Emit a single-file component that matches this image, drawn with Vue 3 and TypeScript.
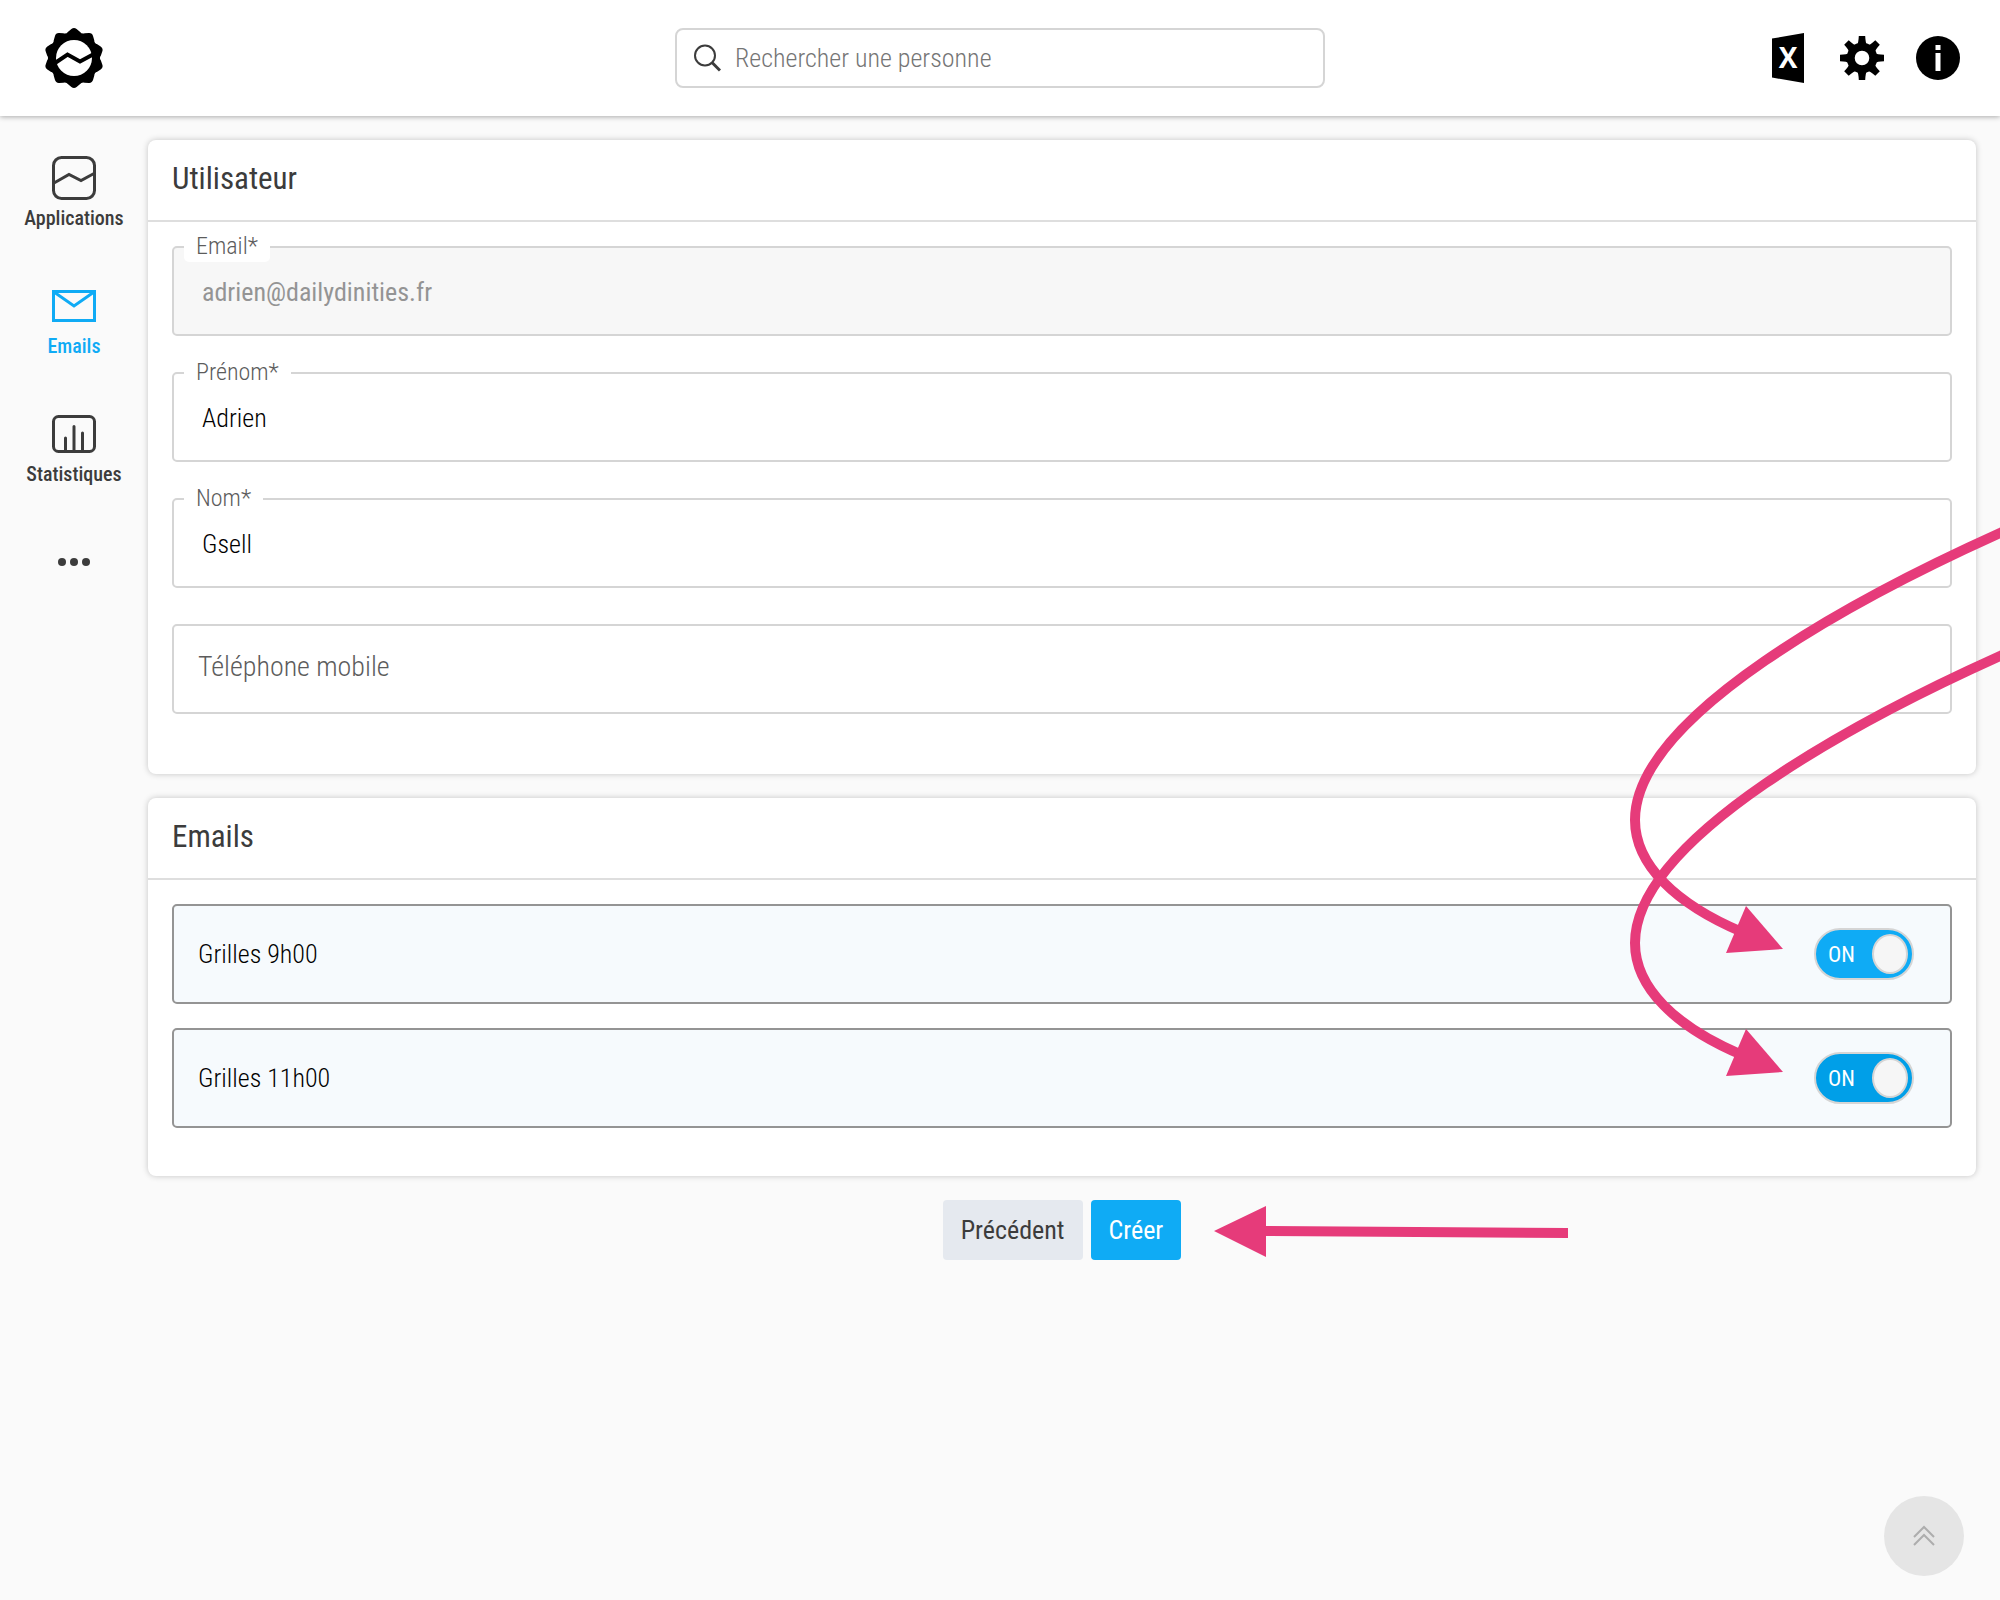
<script setup lang="ts">
import { ref } from 'vue'

interface Field {
  id: string
  label: string
  value: string
  type: string
  disabled?: boolean
}

interface MailingOption {
  id: string
  label: string
  enabled: boolean
  active: boolean
}

const search = ref('')

const fields = ref<Field[]>([
  { id: 'email', label: 'Email*', value: 'adrien@dailydinities.fr', type: 'email', disabled: true },
  { id: 'prenom', label: 'Prénom*', value: 'Adrien', type: 'text' },
  { id: 'nom', label: 'Nom*', value: 'Gsell', type: 'text' },
])

const phone = ref('')

const mailings = ref<MailingOption[]>([
  { id: 'grilles-9', label: 'Grilles 9h00', enabled: true, active: false },
  { id: 'grilles-11', label: 'Grilles 11h00', enabled: true, active: true },
])

// Outline of the ten-lobed badge used as the logo.
function badgePath(lobes: number, outer: number, inner: number): string {
  const at = (angle: number, r: number) =>
    `${(30 + r * Math.sin(angle)).toFixed(2)} ${(30 - r * Math.cos(angle)).toFixed(2)}`
  const step = (2 * Math.PI) / lobes
  let d = ''
  for (let i = 0; i < lobes; i++) {
    const a = i * step
    d += `${i ? 'L' : 'M'}${at(a - 0.09, outer - 1)} Q${at(a, outer + 1)} ${at(a + 0.09, outer - 1)} `
    d += `L${at(a + 0.22, inner + 1)} Q${at(a + step / 2, inner - 1)} ${at(a + step - 0.22, inner + 1)} `
  }
  return `${d}Z`
}

const badge = badgePath(10, 30, 26)
const teeth = [0, 45, 90, 135, 180, 225, 270, 315]
</script>

<template>
  <div class="app">
    <header class="topbar">
      <a class="brand" href="#" aria-label="Accueil">
        <svg width="60" height="60" viewBox="0 0 60 60">
          <path :d="badge" />
          <circle cx="30" cy="30" r="18" fill="#fff" />
          <path d="M11 35 L23.5 26.500 L36 33.500 L49 26.500" fill="none" stroke="#000" stroke-width="4" />
        </svg>
      </a>

      <label class="search">
        <svg width="28" height="28" viewBox="0 0 28 28" fill="none" stroke="#3c3c3c" stroke-width="2">
          <circle cx="12" cy="11.500" r="10" />
          <path d="M19 18.500 L27 26.500" stroke-width="3" />
        </svg>
        <input v-model="search" type="search" placeholder="Rechercher une personne" aria-label="Rechercher une personne" />
      </label>

      <div class="tools">
        <button type="button" class="tool" aria-label="Exporter vers Excel">
          <svg width="36" height="50" viewBox="0 0 36 50">
            <path d="M0 5.500 L32 0 V50 L0 44.500 Z" />
            <text x="16" y="35" text-anchor="middle" class="excel-letter">X</text>
          </svg>
        </button>
        <button type="button" class="tool" aria-label="Paramètres">
          <svg width="44" height="44" viewBox="-22 -22 44 44">
            <circle r="11.300" fill="none" stroke="#000" stroke-width="8" />
            <path
              v-for="angle in teeth"
              :key="angle"
              d="M-5 -13 Q-3.500 -15 -3.200 -22 H3.200 Q3.500 -15 5 -13 Z"
              :transform="`rotate(${angle})`"
            />
          </svg>
        </button>
        <button type="button" class="tool" aria-label="Informations">
          <svg width="44" height="44" viewBox="0 0 44 44">
            <circle cx="22" cy="22" r="22" />
            <path d="M19.500 9 h5 v5 h-5 Z M19.500 17 h5 v18 h-5 Z" fill="#fff" />
          </svg>
        </button>
      </div>
    </header>

    <div class="body">
      <nav class="sidebar">
        <a class="nav-item" href="#">
          <svg width="44" height="44" viewBox="0 0 44 44">
            <rect x="1.500" y="1.500" width="41" height="41" rx="8" />
            <path d="M2 27 L17 18.500 L29 24.500 L42 17.500" />
          </svg>
          <span>Applications</span>
        </a>
        <a class="nav-item current" href="#" aria-current="page">
          <svg width="44" height="44" viewBox="0 0 44 44">
            <rect x="1.500" y="7.500" width="41" height="29" />
            <path d="M2 8 L22 22 L42 8" />
          </svg>
          <span>Emails</span>
        </a>
        <a class="nav-item" href="#">
          <svg width="44" height="44" viewBox="0 0 44 44">
            <rect x="1.500" y="4.500" width="41" height="35" rx="5" />
            <path d="M13.500 39 V26 M22 39 V14.500 M30.500 39 V21" stroke-linecap="round" />
          </svg>
          <span>Statistiques</span>
        </a>
        <button type="button" class="nav-item" aria-label="Plus">
          <svg width="44" height="44" viewBox="0 0 44 44">
            <g class="dots">
              <circle cx="10" cy="22" r="4" />
              <circle cx="22" cy="22" r="4" />
              <circle cx="34" cy="22" r="4" />
            </g>
          </svg>
        </button>
      </nav>

      <main class="content">
        <section class="card">
          <h2>Utilisateur</h2>
          <div class="fields">
            <div v-for="field in fields" :key="field.id" class="field">
              <label :for="field.id">{{ field.label }}</label>
              <input :id="field.id" v-model="field.value" :type="field.type" :disabled="field.disabled" />
            </div>
            <div class="field empty">
              <input v-model="phone" type="tel" placeholder="Téléphone mobile" aria-label="Téléphone mobile" />
            </div>
          </div>
        </section>

        <section class="card">
          <h2>Emails</h2>
          <div class="options">
            <label v-for="item in mailings" :key="item.id" class="option">
              <span>{{ item.label }}</span>
              <span class="switch" :class="{ active: item.active }">
                <input v-model="item.enabled" type="checkbox" :aria-label="item.label" />
                <span class="state">ON</span>
                <span class="knob"></span>
              </span>
            </label>
          </div>
        </section>

        <div class="actions">
          <button type="button" class="btn">Précédent</button>
          <span class="primary-wrap">
            <button type="button" class="btn primary">Créer</button>
            <svg class="pointer" width="354" height="52" viewBox="0 0 354 52" aria-hidden="true">
              <path d="M0 25 L52 0 V20 L354 22 V32 L52 30 V51 Z" />
            </svg>
          </span>
        </div>

        <svg class="curves" width="400" height="580" viewBox="1600 516 400 580" aria-hidden="true">
          <g v-for="dy in [0, 123]" :key="dy" :transform="`translate(0 ${dy})`">
            <path class="shaft" d="M2010 529 L2000 533 C1860 596 1635 715 1635 820 C1635 865 1676 904 1742 932" />
            <path d="M1783 949 L1746 906 L1726 953 Z" />
          </g>
        </svg>
      </main>
    </div>

    <button type="button" class="to-top" aria-label="Haut de page">
      <svg width="24" height="24" viewBox="0 0 24 24">
        <path d="M2 13 L12 3 L22 13 M2 21 L12 11 L22 21" />
      </svg>
    </button>
  </div>
</template>

<style>
body {
  margin: 0;
  background: #fafafa;
}
</style>

<style scoped>
.app {
  min-height: 100vh;
  overflow-x: hidden;
  color: #3c3c3c;
  font-family: "Roboto Condensed", "Roboto", sans-serif;
  font-size: 26px;
  font-weight: 300;
}

.app *,
.app *::before {
  box-sizing: border-box;
}

button,
input {
  font: inherit;
  color: inherit;
}

svg {
  display: block;
}

.topbar {
  position: relative;
  display: grid;
  grid-template-columns: 1fr minmax(0, 650px) 1fr;
  align-items: center;
  height: 116px;
  padding: 0 40px;
  background: #fff;
  box-shadow: 0 1px 5px rgba(0, 0, 0, 0.32);
}

.brand {
  justify-self: start;
  padding-left: 4px;
  color: #000;
}

.search {
  display: flex;
  align-items: center;
  gap: 14px;
  height: 60px;
  padding: 0 16px;
  border: 2px solid #d5d5d5;
  border-radius: 8px;
}

.search input {
  flex: 1;
  min-width: 0;
  padding: 0;
  border: 0;
  outline: 0;
  background: transparent;
  appearance: none;
}

.search input::placeholder {
  color: #757575;
}

.tools {
  display: flex;
  align-items: center;
  justify-content: flex-end;
  gap: 32px;
}

.tool {
  padding: 0;
  border: 0;
  background: none;
}

.excel-letter {
  fill: #fff;
  font-family: "Open Sans", sans-serif;
  font-size: 28px;
  font-weight: 700;
}

.body {
  display: flex;
}

.sidebar {
  display: flex;
  flex: 0 0 148px;
  flex-direction: column;
  padding-top: 40px;
}

.nav-item {
  display: flex;
  flex-direction: column;
  align-items: center;
  gap: 6px;
  height: 128px;
  padding: 0;
  border: 0;
  background: none;
  color: #3c3c3c;
  font-size: 20px;
  font-weight: 500;
  line-height: 24px;
  text-decoration: none;
}

.nav-item svg {
  fill: none;
  stroke: currentColor;
  stroke-width: 3;
}

.nav-item .dots {
  fill: currentColor;
  stroke: none;
}

.nav-item.current {
  color: #0fabf5;
}

.content {
  position: relative;
  flex: 1;
  min-width: 0;
  padding: 24px 24px 24px 0;
}

.card {
  margin-bottom: 24px;
  border-radius: 8px;
  background: #fff;
  box-shadow: 0 0 6px rgba(0, 0, 0, 0.22);
}

h2 {
  height: 82px;
  margin: 0;
  padding: 0 24px;
  border-bottom: 2px solid #dedede;
  font-size: 31px;
  font-weight: 400;
  line-height: 78px;
}

.fields {
  display: grid;
  gap: 36px;
  padding: 24px 24px 60px;
}

.field {
  position: relative;
}

.field label {
  position: absolute;
  top: -16px;
  left: 12px;
  height: 32px;
  padding: 0 12px;
  border-radius: 5px;
  background: #fff;
  color: #5c5c5c;
  font-size: 24px;
  line-height: 32px;
}

.field input {
  display: block;
  width: 100%;
  height: 90px;
  padding: 2px 28px 0;
  border: 2px solid #d5d5d5;
  border-radius: 5px;
  outline: 0;
  background: #fff;
  color: #000;
}

.field input:disabled {
  background: #f7f7f7;
  color: #949494;
  font-weight: 400;
}

.field.empty input {
  padding: 0 24px 6px;
  font-size: 28px;
}

.field.empty input::placeholder {
  color: #5c5c5c;
}

.options {
  display: grid;
  gap: 24px;
  padding: 24px 24px 48px;
}

.option {
  display: flex;
  align-items: center;
  justify-content: space-between;
  height: 100px;
  padding: 0 36px 0 24px;
  border: 2px solid #949494;
  border-radius: 5px;
  background: #f6fafd;
  color: #000;
}

.switch {
  position: relative;
  display: flex;
  align-items: center;
  justify-content: space-between;
  width: 100px;
  height: 52px;
  padding: 0 4px 0 12px;
  border: 2px solid #d5d5d5;
  border-radius: 26px;
  background: #0fabf5;
}

.switch.active {
  background: #009fe8;
}

.switch input {
  position: absolute;
  inset: 0;
  width: 100%;
  height: 100%;
  margin: 0;
  opacity: 0;
}

.state {
  color: #fff;
  font-size: 22px;
  font-weight: 400;
}

.knob {
  width: 36px;
  height: 40px;
  border: 2px solid #d5d5d5;
  border-radius: 50%;
  background: #f6f6f6;
}

.actions {
  display: flex;
  justify-content: center;
  gap: 8px;
}

.btn {
  height: 60px;
  padding: 0 18px;
  border: 0;
  border-radius: 4px;
  background: #e5e9ef;
  color: #3c3c3c;
  font-weight: 400;
}

.btn.primary {
  background: #0fabf5;
  color: #fff;
}

.primary-wrap {
  position: relative;
}

.pointer {
  position: absolute;
  top: 6px;
  left: 100%;
  margin-left: 33px;
  fill: #e63b7a;
}

.curves {
  position: absolute;
  top: 400px;
  right: 0;
  fill: #e63b7a;
  pointer-events: none;
}

.shaft {
  fill: none;
  stroke: #e63b7a;
  stroke-width: 10;
}

.to-top {
  position: fixed;
  right: 36px;
  bottom: 24px;
  display: grid;
  place-items: center;
  width: 80px;
  height: 80px;
  padding: 0;
  border: 0;
  border-radius: 50%;
  background: #e5e5e5;
}

.to-top svg {
  fill: none;
  stroke: #adadad;
  stroke-width: 2;
}
</style>
